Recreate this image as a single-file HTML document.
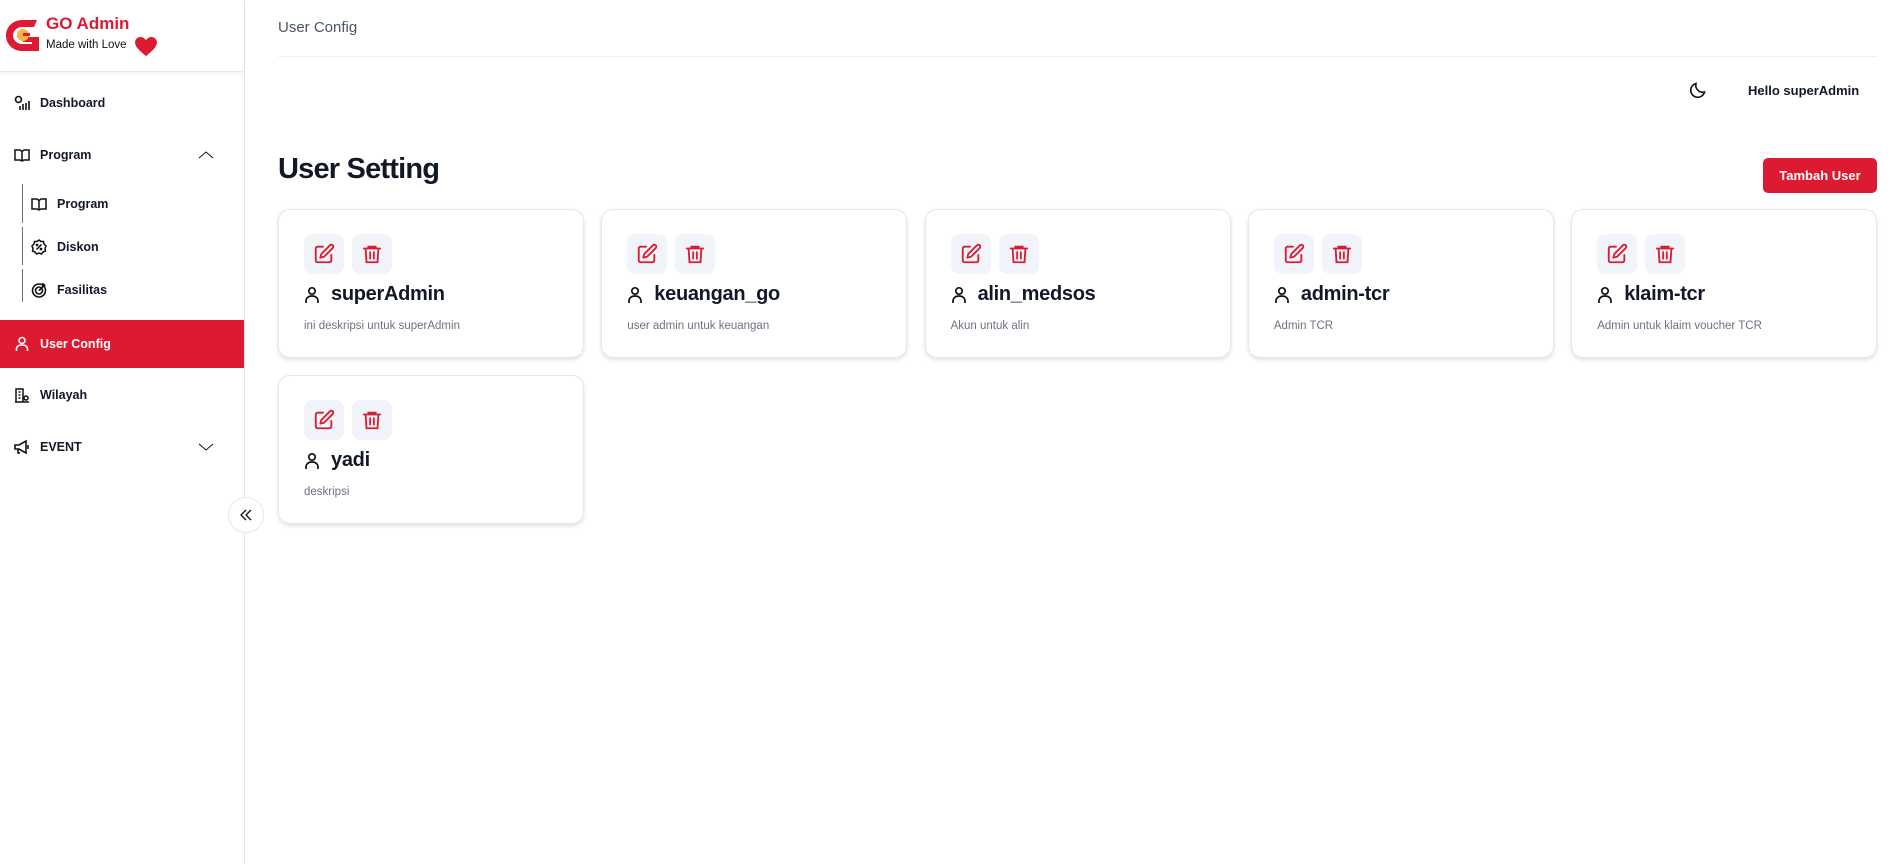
<!DOCTYPE html>
<html><head><meta charset="utf-8"><style>
*{box-sizing:border-box;margin:0;padding:0}
body{width:1888px;height:864px;background:#fff;font-family:"Liberation Sans",sans-serif;color:#111827;position:relative;overflow:hidden}
.side{position:absolute;left:0;top:0;width:245px;height:864px;border-right:1px solid #e5e7eb}
.logo{height:72px;border-bottom:1px solid #e5e7eb;box-shadow:0 2px 3px rgba(0,0,0,.05);position:relative}
.nav{position:absolute;left:0;width:244px;display:flex;align-items:center;font-size:12.5px;font-weight:bold;color:#111827}
.nav svg{position:absolute;left:14px}
.nav span{position:absolute;left:40px}
.sub svg{left:31px}.sub span{left:57px}
.vl{position:absolute;left:22px;width:1px;background:#64748b}
.main{position:absolute;left:278px;right:11px;top:0}
.card{position:absolute;width:306px;height:149px;border:1px solid #e5e7eb;border-radius:12px;box-shadow:0 2px 4px rgba(0,0,0,.12)}
.btn{position:absolute;top:24px;width:40px;height:40px;background:#f1f4f9;border-radius:8px;display:flex;align-items:center;justify-content:center}
.nm{position:absolute;left:25px;top:73px;font-size:20px;font-weight:bold;display:flex;align-items:center;gap:11px;letter-spacing:-.3px}
.ds{position:absolute;left:25px;top:110px;font-size:11.5px;color:#6b7280}
</style></head><body>
<div class="side">
 <div class="logo">
  <svg style="position:absolute;left:6px;top:20px" width="33" height="31" viewBox="0 0 33 31"><path d="M16 0C7 0 0 7 0 15.5S7 31 16 31h17V17H17v5h9v2h-10C11 24 7 20 7 15.5S11 7 16 7h12l3-7z" fill="#dc1a32"/><circle cx="17" cy="15" r="6" fill="#f6b73c"/><rect x="17" y="13" width="7" height="3" fill="#dc1a32"/></svg>
  <div style="position:absolute;left:46px;top:14px;color:#dc1a32;font-size:17px;font-weight:bold">GO Admin</div>
  <div style="position:absolute;left:46px;top:39px;font-size:11.5px;color:#111">Made with Love</div>
  <svg style="position:absolute;left:135px;top:37px" width="22" height="20" viewBox="0 0 24 22"><path d="M12 21C5 15 0 11 0 6 0 2.5 2.8 0 6 0c2.5 0 4.5 1.5 6 3.5C13.5 1.5 15.5 0 18 0c3.2 0 6 2.5 6 6 0 5-5 9-12 15z" fill="#dc1a32"/></svg>
 </div>
 <div class="nav" style="top:93px;height:20px"><svg width="16" height="16" viewBox="0 0 16 16" fill="none" stroke="#111" stroke-width="1.6"><circle cx="4.5" cy="4.5" r="3"/><path d="M6 15v-4M9 15V9M12 15V8M15 15V6"/></svg><span>Dashboard</span></div>
 <div class="nav" style="top:145px;height:20px"><svg width="16" height="16" viewBox="0 0 16 16" fill="none" stroke="#111" stroke-width="1.5"><path d="M1 3h5l2 1.5L10 3h5v10h-5l-2 1-2-1H1zM8 4.5V14"/></svg><span>Program</span>
  <svg style="left:198px" width="16" height="10" viewBox="0 0 16 10" fill="none" stroke="#111"><path d="M1 8l7-6 7 6"/></svg></div>
 <div class="vl" style="top:184px;height:39px"></div>
 <div class="vl" style="top:227px;height:38px"></div>
 <div class="vl" style="top:269px;height:33px"></div>
 <div class="nav sub" style="top:194px;height:20px"><svg width="16" height="16" viewBox="0 0 16 16" fill="none" stroke="#111" stroke-width="1.5"><path d="M1 3h5l2 1.5L10 3h5v10h-5l-2 1-2-1H1zM8 4.5V14"/></svg><span>Program</span></div>
 <div class="nav sub" style="top:237px;height:20px"><svg width="16" height="16" viewBox="0 0 16 16" fill="none" stroke="#111" stroke-width="1.5"><path d="M8 1l2 1.5 2.5 0 .5 2.5 2 2-1 2.5.5 2.5-2.5 1-1.5 2-2.5-1-2.5 1-1.5-2-2.5-1 .5-2.5-1-2.5 2-2 .5-2.5 2.5 0z"/><path d="M5.5 10.5l5-5"/><circle cx="6" cy="6" r=".6"/><circle cx="10" cy="10" r=".6"/></svg><span>Diskon</span></div>
 <div class="nav sub" style="top:280px;height:20px"><svg width="16" height="16" viewBox="0 0 16 16" fill="none" stroke="#111" stroke-width="1.6"><circle cx="8" cy="8.5" r="6.5"/><circle cx="8" cy="8.5" r="3.5"/><path d="M8 8.5l6-6M12 1v2.5h2.5"/></svg><span>Fasilitas</span></div>
 <div class="nav" style="top:320px;height:48px;background:#dc1a32;color:#fff"><svg width="16" height="16" viewBox="0 0 16 16" fill="none" stroke="#fff" stroke-width="1.6"><circle cx="8" cy="4.5" r="3"/><path d="M2.5 15v-2c0-2.5 2-4 5.5-4s5.5 1.5 5.5 4v2"/></svg><span>User Config</span></div>
 <div class="nav" style="top:385px;height:20px"><svg width="16" height="16" viewBox="0 0 16 16" fill="none" stroke="#111" stroke-width="1.5"><path d="M2 15V2h7v13M1 15h14M4.5 5h2M4.5 8h2M4.5 11h2"/><circle cx="12" cy="11" r="2"/></svg><span>Wilayah</span></div>
 <div class="nav" style="top:437px;height:20px"><svg width="16" height="16" viewBox="0 0 16 16" fill="none" stroke="#111" stroke-width="1.6"><path d="M1 6h4l7-4v12l-7-4H1zM4 10v4h2M14 6v4"/></svg><span>EVENT</span>
  <svg style="left:198px" width="16" height="10" viewBox="0 0 16 10" fill="none" stroke="#111"><path d="M1 2l7 6 7-6"/></svg></div>
</div>
<div style="position:absolute;left:228px;top:497px;width:36px;height:36px;border-radius:50%;background:#fff;border:1px solid #e5e7eb;display:flex;align-items:center;justify-content:center"><svg width="14" height="12" viewBox="0 0 14 12" fill="none" stroke="#111" stroke-width="1.3"><path d="M7 1L2 6l5 5M12 1L7 6l5 5"/></svg></div>
<div class="main">
 <div style="position:absolute;left:0;top:19px;font-size:15px;color:#4b5563">User Config</div>
 <div style="position:absolute;left:0;right:0;top:56px;height:1px;background:#eef0f3"></div>
 <svg style="position:absolute;left:1411px;top:81px" width="18" height="18" viewBox="0 0 18 18" fill="none" stroke="#111" stroke-width="1.6"><path d="M15.5 11A7 7 0 0 1 7 2.5 7 7 0 1 0 15.5 11z"/></svg>
 <div style="position:absolute;left:1470px;top:83px;font-size:13px;font-weight:bold">Hello superAdmin</div>
 <div style="position:absolute;left:0;top:153px;font-size:29px;font-weight:bold;letter-spacing:-.8px">User Setting</div>
 <div style="position:absolute;left:1485px;top:158px;width:114px;height:35px;background:#dc1a32;border-radius:5px;color:#fff;font-size:13px;font-weight:bold;display:flex;align-items:center;justify-content:center">Tambah User</div>
</div>
<div id="cards"></div>
<script>
var d=[["superAdmin","ini deskripsi untuk superAdmin"],["keuangan_go","user admin untuk keuangan"],["alin_medsos","Akun untuk alin"],["admin-tcr","Admin TCR"],["klaim-tcr","Admin untuk klaim voucher TCR"],["yadi","deskripsi"]];
var h="";
d.forEach(function(c,i){var x=278+(i%5)*323.3,y=i<5?209:375;
h+='<div class="card" style="left:'+x+'px;top:'+y+'px"><div class="btn" style="left:25px"><svg width="22" height="22" viewBox="0 0 24 24" fill="none" stroke="#dc1a32" stroke-width="2" stroke-linecap="round" stroke-linejoin="round"><path d="M11 4H5a2 2 0 0 0-2 2v13a2 2 0 0 0 2 2h13a2 2 0 0 0 2-2v-6"/><path d="M18.5 2.5a2.1 2.1 0 0 1 3 3L12 15l-4 1 1-4z"/></svg></div><div class="btn" style="left:73px"><svg width="22" height="22" viewBox="0 0 24 24" fill="none" stroke="#dc1a32" stroke-width="2" stroke-linecap="round"><path d="M3 6h18M8 6V4h8v2M5 6l1 15h12l1-15M10 10v7M14 10v7"/></svg></div><div class="nm"><svg width="16" height="18" viewBox="0 0 16 18" fill="none" stroke="#111" stroke-width="1.7"><circle cx="8" cy="5" r="3.2"/><path d="M2 17v-2c0-3 2.5-5 6-5s6 2 6 5v2"/></svg>'+c[0]+'</div><div class="ds">'+c[1]+'</div></div>';});
document.getElementById("cards").innerHTML=h;
</script>
</body></html>
